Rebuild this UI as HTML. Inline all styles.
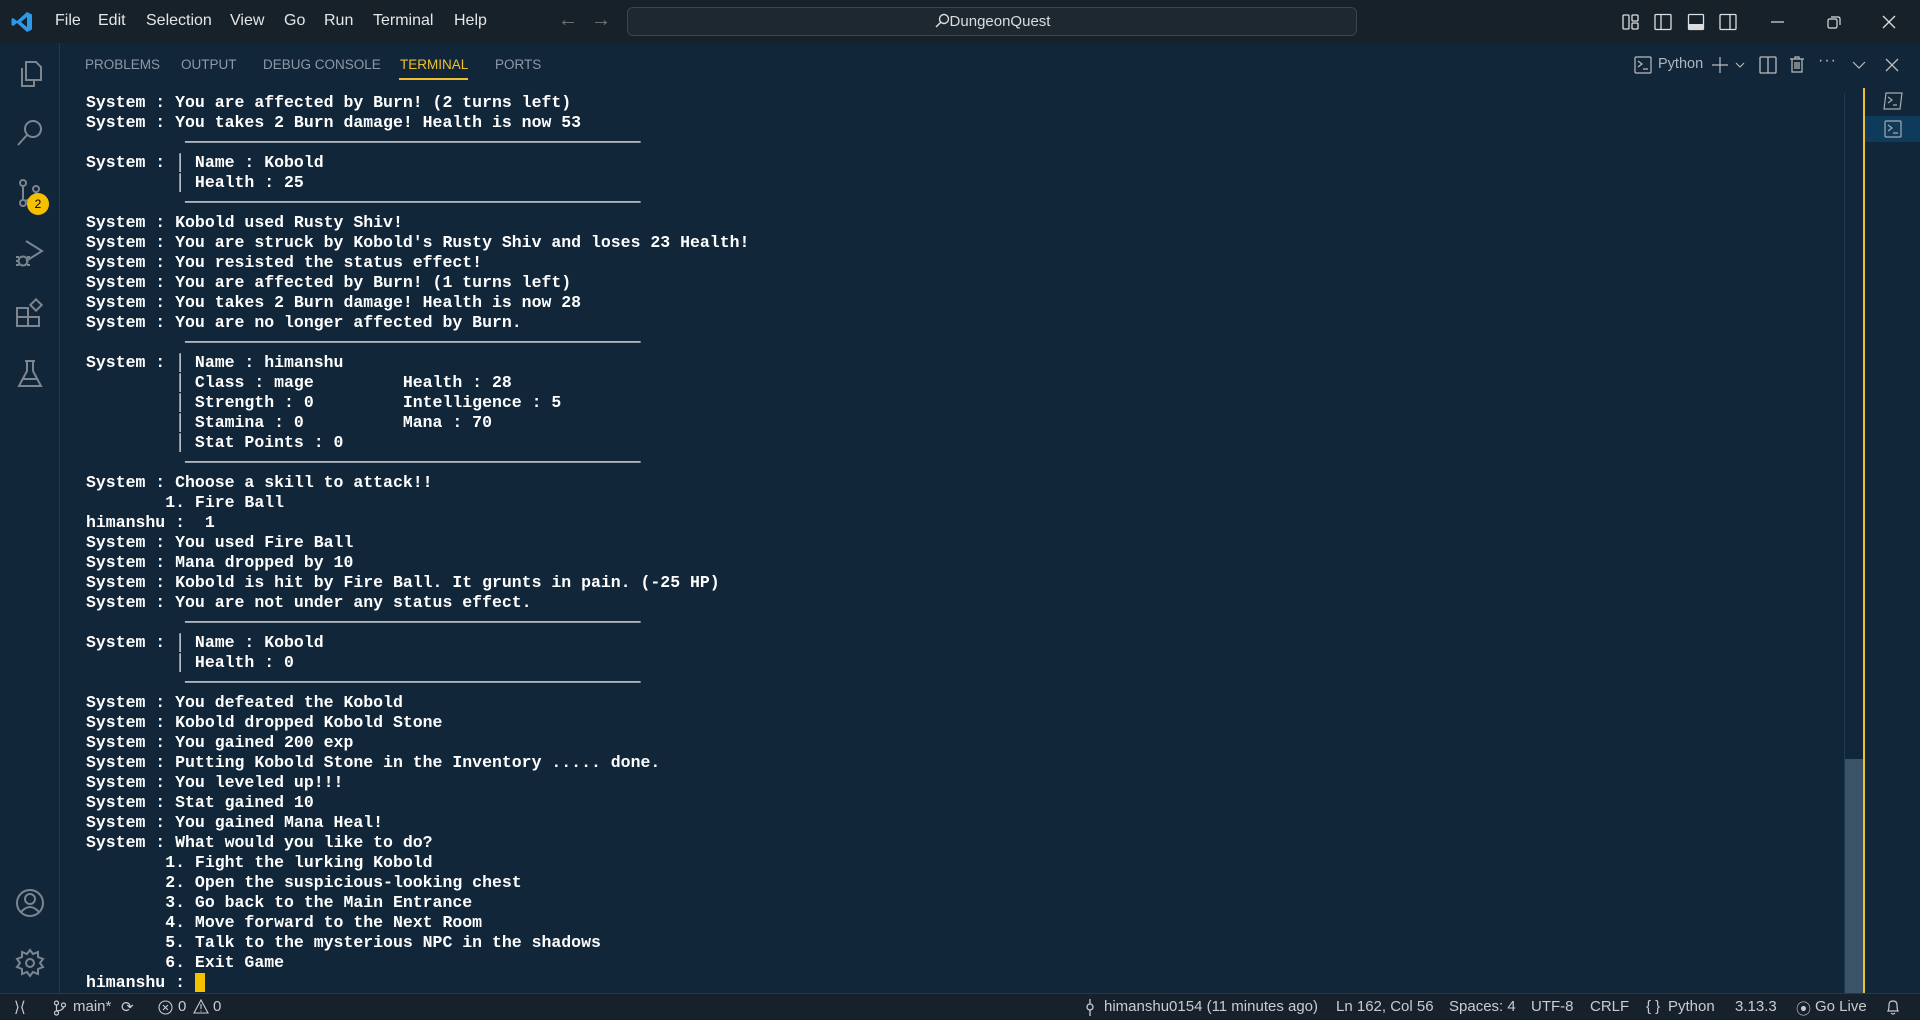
<!DOCTYPE html>
<html><head><meta charset="utf-8"><style>
*{margin:0;padding:0;box-sizing:border-box}
body{width:1920px;height:1020px;background:#12263a;overflow:hidden;position:relative;font-family:"Liberation Sans",sans-serif;color:#ccc}
.abs{position:absolute}
#title{left:0;top:0;width:1920px;height:43px;background:#172129}
.menu{position:absolute;top:12px;font-size:16px;color:#e6e6e6}
#search{left:627px;top:7px;width:730px;height:29px;border:1px solid #3a4550;border-radius:6px;background:#1d2831;color:#ddd;font-size:15px;text-align:center;line-height:27px}
#act{left:0;top:43px;width:60px;height:950px;border-right:1px solid #1e3a52}
.ic{position:absolute;left:14px;width:32px;height:32px}
.tab{position:absolute;top:57px;font-size:13.5px;color:#8e99a6}
pre{position:absolute;left:86px;top:93px;font-family:"Liberation Mono",monospace;font-weight:bold;font-size:16.5px;line-height:20px;color:#fff}
#status{left:0;top:993px;width:1920px;height:27px;background:#17212b;border-top:1px solid #1e3a52;font-size:15px;color:#c8ccd2}
#status span{position:absolute;top:4px}
</style></head><body>
<div id="title" class="abs">
<svg class="abs" style="left:10px;top:10px" width="24" height="24" viewBox="0 0 24 24"><path d="M17 2 L22 4.5 V19.5 L17 22 L7 13 L3 16 L1.5 15 V9 L3 8 L7 11 L17 2Z M17 7 L11 12 L17 17Z" fill="#2b9ae8" fill-rule="evenodd"/></svg>
<span class="menu" style="left:55px">File</span><span class="menu" style="left:98px">Edit</span><span class="menu" style="left:146px">Selection</span><span class="menu" style="left:230px">View</span><span class="menu" style="left:284px">Go</span><span class="menu" style="left:324px">Run</span><span class="menu" style="left:373px">Terminal</span><span class="menu" style="left:454px">Help</span>
<span class="menu" style="left:558px;color:#777;top:9px;font-size:20px">←</span><span class="menu" style="left:591px;color:#777;top:9px;font-size:20px">→</span>
<div id="search" class="abs"><svg width="16" height="16" viewBox="0 0 16 16" style="vertical-align:-3px"><circle cx="10" cy="6" r="4.5" fill="none" stroke="#ddd" stroke-width="1.4"/><path d="M7 9 L2 14" stroke="#ddd" stroke-width="1.5"/></svg>DungeonQuest</div>
<svg class="abs" style="left:1622px;top:13px" width="18" height="18" viewBox="0 0 18 18" fill="none" stroke="#ddd" stroke-width="1.3"><rect x="1" y="2" width="6" height="14" rx="1"/><rect x="10" y="2" width="6" height="6" rx="1"/><rect x="10" y="10" width="6" height="6" rx="1"/></svg>
<svg class="abs" style="left:1654px;top:13px" width="18" height="18" viewBox="0 0 18 18" fill="none" stroke="#ddd" stroke-width="1.3"><rect x="1" y="1.5" width="16" height="15" rx="1"/><path d="M7 2 V16"/></svg>
<svg class="abs" style="left:1687px;top:13px" width="18" height="18" viewBox="0 0 18 18"><rect x="1.5" y="1.5" width="15" height="15" rx="1" fill="none" stroke="#ddd" stroke-width="1.3"/><rect x="2" y="11" width="14" height="5" fill="#ddd"/></svg>
<svg class="abs" style="left:1719px;top:13px" width="18" height="18" viewBox="0 0 18 18" fill="none" stroke="#ddd" stroke-width="1.3"><rect x="1" y="1.5" width="16" height="15" rx="1"/><path d="M11 2 V16"/></svg>
<svg class="abs" style="left:1770px;top:14px" width="16" height="16"><path d="M1 8 H14" stroke="#ddd" stroke-width="1.2"/></svg>
<svg class="abs" style="left:1826px;top:14px" width="16" height="16" fill="none" stroke="#ddd" stroke-width="1.2"><rect x="2" y="5" width="9" height="9" rx="1.5"/><path d="M5 3 H12 Q14 3 14 5 V11"/></svg>
<svg class="abs" style="left:1881px;top:14px" width="16" height="16"><path d="M2 2 L14 14 M14 2 L2 14" stroke="#ddd" stroke-width="1.3"/></svg>
</div>
<div id="act" class="abs">
<svg class="ic" style="top:15px" viewBox="0 0 32 32" fill="none" stroke="#7d858f" stroke-width="2"><path d="M12 4 H22 L27 9 V22 H12Z M8 10 V28 H20 V22"/></svg>
<svg class="ic" style="top:74px" viewBox="0 0 32 32" fill="none" stroke="#7d858f" stroke-width="2"><circle cx="19" cy="12" r="8"/><path d="M13 18 L4 28"/></svg>
<svg class="ic" style="top:134px" viewBox="0 0 32 32" fill="none" stroke="#7d858f" stroke-width="2"><circle cx="9" cy="6" r="3"/><circle cx="9" cy="26" r="3"/><circle cx="22" cy="12" r="3"/><path d="M9 9 V23 M22 15 Q22 20 11 24"/></svg>
<div class="abs" style="left:27px;top:150px;width:22px;height:22px;border-radius:50%;background:#f5c000;color:#000;font-size:12px;text-align:center;line-height:22px">2</div>
<svg class="ic" style="top:194px" viewBox="0 0 32 32" fill="none" stroke="#7d858f" stroke-width="2"><path d="M12 4 L28 14 L12 24"/><circle cx="9" cy="24" r="4.5"/><path d="M2 20 H5 M2 24 H5 M2 28 H5 M13 20 H16 M13 28 H16"/></svg>
<svg class="ic" style="top:255px" viewBox="0 0 32 32" fill="none" stroke="#7d858f" stroke-width="2"><path d="M3 10 H14 V28 H3Z M3 19 H25 V28 H14"/><rect x="18" y="3" width="8" height="8" transform="rotate(45 22 7)"/></svg>
<svg class="ic" style="top:315px" viewBox="0 0 32 32" fill="none" stroke="#7d858f" stroke-width="2"><path d="M11 3 H21 M13 3 V13 L5 28 H27 L19 13 V3 M9 21 H23"/></svg>
<svg class="ic" style="top:844px" viewBox="0 0 32 32" fill="none" stroke="#7d858f" stroke-width="2"><circle cx="16" cy="16" r="13"/><circle cx="16" cy="12" r="5"/><path d="M7 25 Q16 15 25 25"/></svg>
<svg class="ic" style="top:904px" viewBox="0 0 32 32" fill="none" stroke="#7d858f" stroke-width="2"><circle cx="16" cy="16" r="4"/><path d="M16 3 L19 7 L24 5 L24 10 L29 12 L26 16 L29 20 L24 22 L24 27 L19 25 L16 29 L13 25 L8 27 L8 22 L3 20 L6 16 L3 12 L8 10 L8 5 L13 7Z"/></svg>
</div>
<span class="tab" style="left:85px">PROBLEMS</span><span class="tab" style="left:181px">OUTPUT</span><span class="tab" style="left:263px">DEBUG CONSOLE</span><span class="tab" style="left:400px;color:#f0c030">TERMINAL</span><span class="tab" style="left:495px">PORTS</span>
<div class="abs" style="left:399px;top:78px;width:69px;height:2px;background:#f0c030"></div>
<svg class="abs" style="left:1634px;top:56px" width="18" height="18" fill="none" stroke="#bbb" stroke-width="1.2"><rect x="1" y="1" width="16" height="16" rx="1"/><path d="M4 5 L8 8 L4 11 M9 13 H14"/></svg>
<span class="abs" style="left:1658px;top:56px;font-size:14.5px;color:#b0b6bd">Python</span>
<svg class="abs" style="left:1711px;top:56px" width="18" height="18"><path d="M9 1 V17 M1 9 H17" stroke="#bbb" stroke-width="1.2"/></svg>
<svg class="abs" style="left:1734px;top:59px" width="12" height="12"><path d="M2 4 L6 8 L10 4" fill="none" stroke="#bbb" stroke-width="1.1"/></svg>
<svg class="abs" style="left:1759px;top:56px" width="18" height="18" fill="none" stroke="#bbb" stroke-width="1.3"><rect x="1" y="1" width="16" height="16" rx="1"/><path d="M9 1 V17"/></svg>
<svg class="abs" style="left:1789px;top:55px" width="16" height="18" fill="none" stroke="#bbb" stroke-width="1.2"><path d="M1 4 H15 M6 4 V2 H10 V4 M3 4 V17 H13 V4 M6 7 V14 M8 7 V14 M10 7 V14"/></svg>
<span class="abs" style="left:1818px;top:52px;font-size:16px;color:#bbb;letter-spacing:1px">···</span>
<svg class="abs" style="left:1851px;top:57px" width="16" height="16"><path d="M2 5 L8 11 L14 5" fill="none" stroke="#bbb" stroke-width="1.2"/></svg>
<svg class="abs" style="left:1884px;top:57px" width="16" height="16"><path d="M2 2 L14 14 M14 2 L2 14" stroke="#bbb" stroke-width="1.3"/></svg>
<pre>System : You are affected by Burn! (2 turns left)
System : You takes 2 Burn damage! Health is now 53
          ──────────────────────────────────────────────
System : │ Name : Kobold
         │ Health : 25
          ──────────────────────────────────────────────
System : Kobold used Rusty Shiv!
System : You are struck by Kobold's Rusty Shiv and loses 23 Health!
System : You resisted the status effect!
System : You are affected by Burn! (1 turns left)
System : You takes 2 Burn damage! Health is now 28
System : You are no longer affected by Burn.
          ──────────────────────────────────────────────
System : │ Name : himanshu
         │ Class : mage         Health : 28
         │ Strength : 0         Intelligence : 5
         │ Stamina : 0          Mana : 70
         │ Stat Points : 0
          ──────────────────────────────────────────────
System : Choose a skill to attack!!
        1. Fire Ball
himanshu :  1
System : You used Fire Ball
System : Mana dropped by 10
System : Kobold is hit by Fire Ball. It grunts in pain. (-25 HP)
System : You are not under any status effect.
          ──────────────────────────────────────────────
System : │ Name : Kobold
         │ Health : 0
          ──────────────────────────────────────────────
System : You defeated the Kobold
System : Kobold dropped Kobold Stone
System : You gained 200 exp
System : Putting Kobold Stone in the Inventory ..... done.
System : You leveled up!!!
System : Stat gained 10
System : You gained Mana Heal!
System : What would you like to do?
        1. Fight the lurking Kobold
        2. Open the suspicious-looking chest
        3. Go back to the Main Entrance
        4. Move forward to the Next Room
        5. Talk to the mysterious NPC in the shadows
        6. Exit Game
himanshu : <span style="background:#f5c000">&nbsp;</span></pre>
<div class="abs" style="left:1845px;top:759px;width:18px;height:234px;background:#3a5366"></div>
<div class="abs" style="left:1844px;top:93px;width:1px;height:900px;background:#1e3a52"></div>
<div class="abs" style="left:1863px;top:88px;width:2px;height:905px;background:#f0c030"></div>
<div class="abs" style="left:1865px;top:116px;width:55px;height:26px;background:#0e3a5c"></div>
<svg class="abs" style="left:1883px;top:92px" width="20" height="18" fill="none" stroke="#aaa" stroke-width="1.2"><path d="M3 1 H19 L17 17 H1Z M5 5 L9 8 L5 11 M10 13 H14"/></svg>
<svg class="abs" style="left:1884px;top:120px" width="18" height="18" fill="none" stroke="#aaa" stroke-width="1.2"><rect x="1" y="1" width="16" height="16" rx="1"/><path d="M4 5 L8 8 L4 11 M9 13 H14"/></svg>
<div id="status" class="abs">
<span style="left:14px">⟩⟨</span>
<svg class="abs" style="left:53px;top:6px" width="14" height="16" fill="none" stroke="#c8ccd2" stroke-width="1.2"><circle cx="3.5" cy="3" r="2"/><circle cx="3.5" cy="13" r="2"/><circle cx="10.5" cy="5" r="2"/><path d="M3.5 5 V11 M10.5 7 Q10.5 10 4 11"/></svg>
<span style="left:73px">main*</span>
<span style="left:121px">⟳</span>
<svg class="abs" style="left:158px;top:6px" width="15" height="15" fill="none" stroke="#c8ccd2" stroke-width="1.1"><circle cx="7.5" cy="7.5" r="6.5"/><path d="M5 5 L10 10 M10 5 L5 10"/></svg>
<span style="left:178px">0</span>
<svg class="abs" style="left:193px;top:5px" width="16" height="15" fill="none" stroke="#c8ccd2" stroke-width="1.1"><path d="M8 1 L15 14 H1Z M8 5 V10 M8 11.5 V12.5"/></svg>
<span style="left:213px">0</span>
<svg class="abs" style="left:1085px;top:5px" width="10" height="17" fill="none" stroke="#c8ccd2" stroke-width="1.3"><circle cx="5" cy="8" r="3"/><path d="M5 0 V5 M5 11 V17"/></svg>
<span style="left:1104px">himanshu0154 (11 minutes ago)</span>
<span style="left:1336px">Ln 162, Col 56</span>
<span style="left:1449px">Spaces: 4</span>
<span style="left:1531px">UTF-8</span>
<span style="left:1590px">CRLF</span>
<span style="left:1646px">{ }</span>
<span style="left:1668px">Python</span>
<span style="left:1735px">3.13.3</span>
<span style="left:1796px">⦿</span>
<span style="left:1815px">Go Live</span>
<svg class="abs" style="left:1886px;top:5px" width="14" height="17" fill="none" stroke="#c8ccd2" stroke-width="1.2"><path d="M2 12 Q3 10 3 6 Q3 2 7 2 Q11 2 11 6 Q11 10 12 12Z M5 14 Q7 16 9 14"/></svg>
</div>
</body></html>
